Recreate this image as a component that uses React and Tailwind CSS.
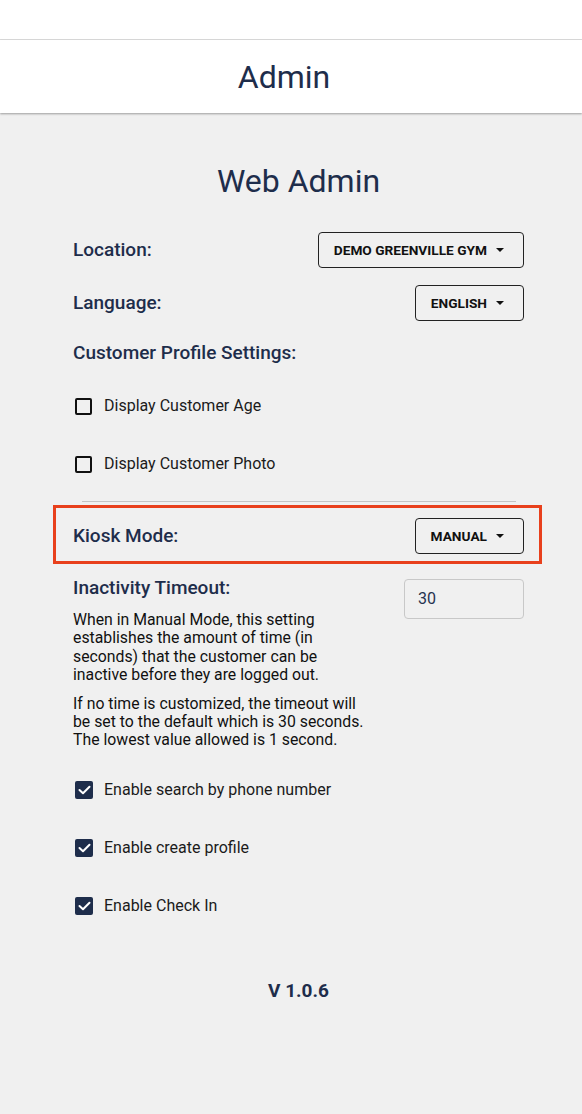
import React from "react";

const NAVY = "text-[#1e2d4b]";

function Caret() {
  return (
    <svg width="8" height="4" viewBox="0 0 8 4" className="shrink-0">
      <path d="M0 0 L8 0 L4 4 Z" fill="#111" />
    </svg>
  );
}

function DropButton({ label }) {
  return (
    <button className="h-[36px] flex items-center gap-[9px] pl-[15px] pr-[19px] border border-[#222] rounded-[4px] text-[13.7px] font-bold text-[#111] bg-transparent">
      <span>{label}</span>
      <Caret />
    </button>
  );
}

function Box({ checked }) {
  if (checked) {
    return (
      <span className="w-[18px] h-[18px] rounded-[2px] bg-[#1e2d4b] flex items-center justify-center">
        <svg width="13" height="10" viewBox="0 0 13 10">
          <path d="M1.5 5 L5 8.3 L11.5 1.7" stroke="#fff" strokeWidth="2" fill="none" strokeLinecap="round" strokeLinejoin="round" />
        </svg>
      </span>
    );
  }
  return <span className="w-[17px] h-[17px] rounded-[2px] border-2 border-[#111] bg-transparent" />;
}

function CheckRow({ label, checked, className = "" }) {
  return (
    <div className={"h-[36px] flex items-center " + className}>
      <div className="w-[31px] pl-[2px] flex items-center">
        <Box checked={checked} />
      </div>
      <span className="text-[16px] text-[#1b1b1b]">{label}</span>
    </div>
  );
}

export default function App() {
  return (
    <div
      className="min-h-[1114px] bg-[#f0f0f0]"
      style={{ fontFamily: "Roboto, 'Noto Sans', Arial, sans-serif" }}
    >
      <div className="bg-white h-[40px] border-b border-[#dcdcdc]" />
      <div className="bg-white h-[73px] flex items-center justify-center pr-[14px] shadow-[0_1px_2px_rgba(0,0,0,0.35)] relative">
        <span className={"text-[32px] leading-[38px] " + NAVY}>Admin</span>
      </div>

      <div className="pl-[73px] pr-[58px] flex flex-col">
        <div className={"mt-[49px] h-[38px] text-[32px] leading-[38px] text-center " + NAVY}>
          Web Admin
        </div>

        <div className="mt-[32px] h-[36px] flex items-center justify-between">
          <span className={"text-[19px] font-medium " + NAVY}>Location:</span>
          <DropButton label="DEMO GREENVILLE GYM" />
        </div>

        <div className="mt-[17px] h-[36px] flex items-center justify-between">
          <span className={"text-[19px] font-medium " + NAVY}>Language:</span>
          <DropButton label="ENGLISH" />
        </div>

        <div className="mt-[14px] h-[36px] flex items-center">
          <span className={"text-[19px] font-medium " + NAVY}>Customer Profile Settings:</span>
        </div>

        <CheckRow className="mt-[17px]" label="Display Customer Age" />
        <CheckRow className="mt-[22px]" label="Display Customer Photo" />

        <div className="mt-[19px] h-px bg-[#c4c4c4] ml-[9px] mr-[8px]" />

        <div className="mt-[3px] -ml-[20px] -mr-[18px] border-[3px] border-[#e8401c] pl-[17px] pr-[15px] pt-[10px] pb-[7px] flex items-center justify-between">
          <span className={"text-[19px] font-medium " + NAVY}>Kiosk Mode:</span>
          <DropButton label="MANUAL" />
        </div>

        <div className="mt-[12px] flex items-start justify-between">
          <div className="w-[292px]">
            <div className={"h-[24px] leading-[24px] text-[19px] font-medium " + NAVY}>
              Inactivity Timeout:
            </div>
            <p className="mt-[11px] text-[15.8px] leading-[18.4px] text-[#111]">
              When in Manual Mode, this setting establishes the amount of time (in seconds) that the customer can be inactive before they are logged out.
            </p>
            <p className="mt-[10px] text-[15.8px] leading-[18.4px] text-[#111]">
              If no time is customized, the timeout will be set to the default which is 30 seconds. The lowest value allowed is 1 second.
            </p>
          </div>
          <div className="mt-[3px] w-[120px] h-[40px] border border-[#c8c8c8] rounded-[4px] flex items-center pl-[13px] text-[16px] text-[#26334f]">
            30
          </div>
        </div>

        <CheckRow className="mt-[22px]" label="Enable search by phone number" checked />
        <CheckRow className="mt-[22px]" label="Enable create profile" checked />
        <CheckRow className="mt-[22px]" label="Enable Check In" checked />

        <div className={"mt-[55px] h-[24px] leading-[24px] text-center text-[19px] font-bold " + NAVY}>
          V 1.0.6
        </div>
      </div>
    </div>
  );
}
